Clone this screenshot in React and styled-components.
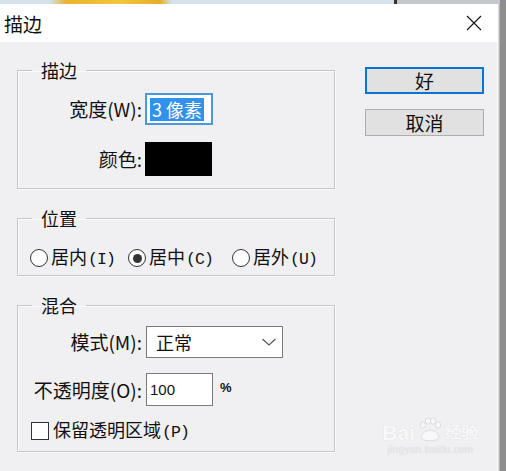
import React from 'react';
import styled, { createGlobalStyle } from 'styled-components';

const GlobalStyle = createGlobalStyle`
  html, body {
    margin: 0;
    padding: 0;
    background: #8e8e8e;
  }
  body {
    font-family: "Noto Sans CJK SC", "Noto Sans", sans-serif;
    color: #111;
    overflow: hidden;
  }
`;

const Screen = styled.div`
  width: 506px;
  height: 471px;
  display: flex;
  flex-direction: column;
  overflow: hidden;
`;

// the window behind the dialog peeking out at the top
const BackStrip = styled.div`
  flex: none;
  height: 4px;
  background: linear-gradient(90deg,
    #d3e1ec 0, #d3e1ec 50px, #e8b42e 66px, #f1c63c 120px, #e4ae2a 160px,
    #d6e3ec 172px, #d6e3ec 394px, #333 394px, #333 397px,
    #c4c8cc 397px, #c4c8cc 500px, #8e8e8e 500px);
`;

const Row = styled.div`
  flex: 1;
  display: flex;
`;

const Dialog = styled.div`
  position: relative;
  width: 497px;
  display: flex;
  flex-direction: column;
  background: #f0eff2;
  border-right: 1px solid #fbfbfb;
  box-shadow: 1px 0 0 #dcdcdc, 2px 0 0 #b4b4b4;
`;

const Shade = styled.div`
  flex: 1;
  background: #8e8e8e;
`;

const TitleBar = styled.div`
  height: 38px;
  flex: none;
  display: flex;
  align-items: center;
  justify-content: space-between;
  padding: 0 15px 0 4px;
  background: #fff;
`;

const Title = styled.span`
  font-size: 19px;
  line-height: 22px;
  margin-top: 2px;
`;

const Body = styled.div`
  flex: 1;
  display: flex;
  align-items: flex-start;
  gap: 30px;
  padding: 18px 0 0 17px;
`;

const LeftCol = styled.div`
  width: 318px;
  display: flex;
  flex-direction: column;
  gap: ${p => p.$gap || 19}px;
`;

const Group = styled.fieldset`
  margin: 0;
  min-width: 0;
  padding: ${p => p.$pad};
  border: 1px solid #c6c6c6;
  box-shadow: inset 1px 1px 0 #fbfbfb, 1px 1px 0 #fbfbfb;
  display: flex;
  flex-direction: column;
  gap: ${p => p.$gap || 0}px;
`;

const Legend = styled.legend`
  margin-left: 14px;
  padding: 0 9px;
  font-size: 18px;
  line-height: 20px;
`;

const FieldRow = styled.div`
  display: grid;
  grid-template-columns: 124px auto 1fr;
  column-gap: ${p => p.$gap || 3}px;
  align-items: center;
  height: ${p => p.$h || 32}px;
`;

const Label = styled.label`
  text-align: right;
  font-size: 19px;
  line-height: 22px;
  white-space: nowrap;
`;

const WidthInput = styled.div`
  box-sizing: border-box;
  width: 68px;
  height: 32px;
  border: 2px solid #4a97e2;
  background: #fff;
  display: flex;
  align-items: center;
  padding-left: 3px;
`;

const Selected = styled.span`
  background: #3391ee;
  color: #fff;
  font-size: 18px;
  line-height: 23px;
  padding: 0 2px;
  white-space: nowrap;
`;

const Swatch = styled.div`
  width: 67px;
  height: 34px;
  background: #000;
`;

const RadioRow = styled.div`
  display: flex;
  align-items: center;
  height: 20px;
  padding-left: 12px;
`;

const RadioItem = styled.label`
  display: flex;
  align-items: center;
  gap: 3px;
  margin-left: ${p => p.$offset || 0}px;
  font-size: 18px;
  line-height: 20px;
  white-space: nowrap;
`;

const RadioCircle = styled.span`
  box-sizing: border-box;
  width: 18px;
  height: 18px;
  border-radius: 50%;
  border: 1px solid #333;
  background: #fff;
  display: flex;
  align-items: center;
  justify-content: center;
  &::after {
    content: "";
    width: 9px;
    height: 9px;
    border-radius: 50%;
    background: ${p => (p.$checked ? '#333' : 'transparent')};
  }
`;

// half-width mnemonic like "(I)", drawn in the old bitmap-ish monospace style
const Key = styled.span`
  font-family: "Liberation Mono", monospace;
  font-size: 16.5px;
  letter-spacing: -0.9px;
  margin-left: 1px;
`;

const Select = styled.div`
  box-sizing: border-box;
  width: 137px;
  height: 32px;
  border: 1px solid #7a7a7a;
  background: #fff;
  display: flex;
  align-items: center;
  justify-content: space-between;
  padding: 0 5px 0 9px;
  font-size: 18px;
`;

const TextInput = styled.div`
  box-sizing: border-box;
  width: 67px;
  height: 33px;
  border: 1px solid #7a7a7a;
  background: #fff;
  display: flex;
  align-items: center;
  padding-left: 3px;
  font-family: "Liberation Sans", Arial, sans-serif;
  font-size: 15px;
`;

const Unit = styled.span`
  font-family: "Liberation Sans", Arial, sans-serif;
  font-size: 13px;
  font-weight: bold;
  margin-left: 3px;
  margin-top: -4px;
`;

const CheckRow = styled.label`
  display: flex;
  align-items: center;
  gap: 4px;
  height: 20px;
  padding-left: 13px;
  font-size: 18px;
  line-height: 20px;
`;

const CheckBox = styled.span`
  box-sizing: border-box;
  width: 18px;
  height: 18px;
  border: 1px solid #333;
  background: #fff;
`;

const RightCol = styled.div`
  margin-top: 7px;
  width: 119px;
  display: flex;
  flex-direction: column;
  gap: 15px;
`;

const Button = styled.button`
  box-sizing: border-box;
  width: 119px;
  height: 27px;
  padding: 0;
  background: #e1e1e1;
  border: ${p => (p.$primary ? '2px solid #0a74d0' : '1px solid #adadad')};
  font-family: inherit;
  font-size: 19px;
  line-height: 22px;
  color: #111;
`;

const Watermark = styled.div`
  position: absolute;
  right: 18px;
  bottom: 16px;
  display: flex;
  flex-direction: column;
  align-items: center;
  color: #f8f8f9;
  text-shadow: 0 0 1px #d4d4d8;
  pointer-events: none;
`;

const MarkTop = styled.div`
  display: flex;
  align-items: flex-end;
  font-family: "Liberation Sans", Arial, sans-serif;
  font-size: 21px;
  font-weight: bold;
  line-height: 22px;
`;

const MarkSub = styled.div`
  font-family: "Liberation Sans", Arial, sans-serif;
  font-size: 10px;
  color: #e8e8eb;
  letter-spacing: 0.3px;
`;

const CloseIcon = () => (
  <svg width="16" height="16" viewBox="0 0 16 16">
    <path d="M1 1 L15 15 M15 1 L1 15" stroke="#111" strokeWidth="1.1" fill="none" />
  </svg>
);

const Chevron = () => (
  <svg width="16" height="10" viewBox="0 0 16 10">
    <polyline points="1.5,2 8,8 14.5,2" stroke="#555" strokeWidth="1.2" fill="none" />
  </svg>
);

const Paw = () => (
  <svg width="26" height="26" viewBox="0 0 26 26" style={{ margin: '0 2px 1px' }}>
    <g fill="#f8f8f9" stroke="#d4d4d8" strokeWidth="0.8">
      <ellipse cx="6" cy="8" rx="2.6" ry="3.2" />
      <ellipse cx="11" cy="4" rx="2.6" ry="3.2" />
      <ellipse cx="16" cy="4" rx="2.6" ry="3.2" />
      <ellipse cx="21" cy="8" rx="2.6" ry="3.2" />
      <path d="M4 20 C6 11 20 11 22 20 C22 25 4 25 4 20 Z" />
    </g>
  </svg>
);

const App = () => (
  <Screen>
    <GlobalStyle />
    <BackStrip />
    <Row>
      <Dialog>
        <TitleBar>
          <Title>描边</Title>
          <CloseIcon />
        </TitleBar>
        <Body>
          <LeftCol>
            <Group $pad="13px 0 12px" $gap={17}>
              <Legend>描边</Legend>
              <FieldRow $h={32}>
                <Label>宽度(W):</Label>
                <WidthInput>
                  <Selected>3 像素</Selected>
                </WidthInput>
              </FieldRow>
              <FieldRow $h={34}>
                <Label>颜色:</Label>
                <Swatch />
              </FieldRow>
            </Group>

            <Group $pad="20px 0 7px">
              <Legend>位置</Legend>
              <RadioRow>
                <RadioItem>
                  <RadioCircle />
                  <span>居内<Key>(I)</Key></span>
                </RadioItem>
                <RadioItem $offset={13}>
                  <RadioCircle $checked />
                  <span>居中<Key>(C)</Key></span>
                </RadioItem>
                <RadioItem $offset={19}>
                  <RadioCircle />
                  <span>居外<Key>(U)</Key></span>
                </RadioItem>
              </RadioRow>
            </Group>

            <Group $pad="11px 0 10px" $gap={15}>
              <Legend>混合</Legend>
              <FieldRow $h={32} $gap={4}>
                <Label>模式(M):</Label>
                <Select>
                  <span>正常</span>
                  <Chevron />
                </Select>
              </FieldRow>
              <FieldRow $h={33} $gap={4}>
                <Label>不透明度(O):</Label>
                <TextInput>100</TextInput>
                <Unit>%</Unit>
              </FieldRow>
              <CheckRow>
                <CheckBox />
                <span>保留透明区域<Key>(P)</Key></span>
              </CheckRow>
            </Group>
          </LeftCol>

          <RightCol>
            <Button $primary>好</Button>
            <Button>取消</Button>
          </RightCol>
        </Body>

        <Watermark>
          <MarkTop>
            <span>Bai</span>
            <Paw />
            <span style={{ fontSize: 17 }}>经验</span>
          </MarkTop>
          <MarkSub>jingyan.baidu.com</MarkSub>
        </Watermark>
      </Dialog>
      <Shade />
    </Row>
  </Screen>
);

export default App;
